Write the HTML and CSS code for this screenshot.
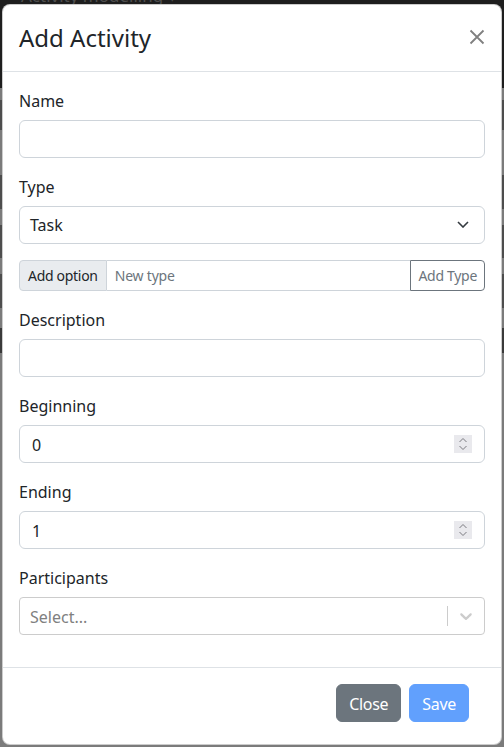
FILE: index.html
```html
<!DOCTYPE html>
<html lang="en">
<head>
<meta charset="utf-8">
<title>Add Activity</title>
<link rel="stylesheet" href="styles.css">
</head>
<body>
<div class="topbar"><span class="topbar-text">Activity modelling &#9662;</span></div>
<div class="modal">
  <div class="modal-header">
    <h4 class="modal-title">Add Activity</h4>
    <button class="btn-close" type="button" aria-label="Close">
      <svg width="16" height="16" viewBox="0 0 16 16"><path d="M1.5 1.5L14.5 14.5M14.5 1.5L1.5 14.5" stroke="#808080" stroke-width="1.8" fill="none"/></svg>
    </button>
  </div>
  <div class="modal-body">
    <div class="group">
      <label class="form-label">Name</label>
      <input class="form-control" type="text">
    </div>
    <div class="group">
      <label class="form-label">Type</label>
      <div class="form-select">
        <span>Task</span>
        <svg width="12" height="7" viewBox="0 0 12 7"><path d="M1 1L6 6L11 1" stroke="#343a40" stroke-width="1.6" fill="none"/></svg>
      </div>
    </div>
    <div class="group input-group">
      <span class="ig-text">Add option</span>
      <input class="ig-input" type="text" placeholder="New type">
      <button class="ig-btn" type="button">Add Type</button>
    </div>
    <div class="group">
      <label class="form-label">Description</label>
      <input class="form-control" type="text">
    </div>
    <div class="group">
      <label class="form-label">Beginning</label>
      <div class="number-control">
        <input class="number-input" type="text" value="0">
        <span class="spinner"><svg width="18" height="18" viewBox="0 0 18 18"><path d="M5.5 7L9 3.5L12.5 7M5.5 11L9 14.5L12.5 11" stroke="#7a7a80" stroke-width="1" fill="none"/></svg></span>
      </div>
    </div>
    <div class="group">
      <label class="form-label">Ending</label>
      <div class="number-control">
        <input class="number-input" type="text" value="1">
        <span class="spinner"><svg width="18" height="18" viewBox="0 0 18 18"><path d="M5.5 7L9 3.5L12.5 7M5.5 11L9 14.5L12.5 11" stroke="#7a7a80" stroke-width="1" fill="none"/></svg></span>
      </div>
    </div>
    <div class="group">
      <label class="form-label">Participants</label>
      <div class="rs-control">
        <div class="rs-value">Select...</div>
        <span class="rs-sep"></span>
        <span class="rs-indicator"><svg width="20" height="20" viewBox="0 0 20 20"><path fill="#cccccc" d="M4.516 7.548c0.436-0.446 1.043-0.481 1.576 0l3.908 3.747 3.908-3.747c0.533-0.481 1.141-0.446 1.574 0 0.436 0.445 0.408 1.197 0 1.615-0.406 0.418-4.695 4.502-4.695 4.502-0.217 0.223-0.502 0.335-0.787 0.335s-0.57-0.112-0.789-0.335c0 0-4.287-4.084-4.695-4.502s-0.436-1.17 0-1.615z"/></svg></span>
      </div>
    </div>
  </div>
  <div class="modal-footer">
    <button class="btn btn-secondary" type="button">Close</button>
    <button class="btn btn-primary" type="button">Save</button>
  </div>
</div>
</body>
</html>
```
FILE: styles.css
```css
* { box-sizing: border-box; }
html, body { height: 100%; }
body {
  margin: 0;
  font-family: "Noto Sans", "Segoe UI", sans-serif;
  font-size: 16px;
  line-height: 1.5;
  color: #212529;
  overflow: hidden;
  background: linear-gradient(to bottom,
    #1e1e1e 0 88px,
    #7b7b7b 88px 100px,
    #4d4d4d 100px 130px,
    #7b7b7b 130px 175px,
    #4d4d4d 175px 209px,
    #7b7b7b 209px 225px,
    #4d4d4d 225px 258px,
    #7b7b7b 258px 274px,
    #4d4d4d 274px 308px,
    #7b7b7b 308px 328px,
    #3a3a3a 328px 353px,
    #7b7b7b 353px 747px);
}
.topbar {
  height: 4px;
  overflow: hidden;
  padding-left: 21px;
  background: #1e1e1e;
  line-height: 24px;
}
.topbar-text {
  display: block;
  margin-top: -16px;
  color: #4e4e4e;
  font-size: 17px;
  white-space: nowrap;
}
.modal {
  margin: 0 2px;
  background: #fff;
  border: 1px solid rgba(0, 0, 0, 0.2);
  border-radius: 8px;
}
.modal-header {
  display: flex;
  align-items: center;
  justify-content: space-between;
  padding: 15px 16px;
  border-bottom: 1px solid #dee2e6;
}
.modal-title {
  margin: 0;
  font-size: 24px;
  font-weight: 400;
  line-height: 36px;
  color: #212529;
}
.btn-close {
  border: 0;
  background: transparent;
  padding: 0;
  width: 16px;
  height: 16px;
  margin-bottom: 3px;
  display: flex;
}
.modal-body {
  padding: 16px;
}
.group {
  margin-bottom: 16px;
}
.form-label {
  display: block;
  margin-bottom: 8px;
  padding-top: 1px;
  height: 24px;
  line-height: 24px;
}
.form-control {
  display: block;
  width: 100%;
  height: 38px;
  padding: 6px 12px;
  font: inherit;
  color: #212529;
  background: #fff;
  border: 1px solid #ced4da;
  border-radius: 6px;
}
.form-select {
  display: flex;
  align-items: center;
  justify-content: space-between;
  height: 38px;
  padding: 6px 15px 6px 10px;
  border: 1px solid #ced4da;
  border-radius: 6px;
  background: #fff;
}
.form-select svg { margin-top: -2px; }
.input-group {
  display: flex;
  height: 31px;
}
.ig-text {
  display: flex;
  align-items: center;
  padding: 4px 8px;
  font-size: 14px;
  line-height: 21px;
  letter-spacing: -0.3px;
  background: #e9ecef;
  border: 1px solid #ced4da;
  border-radius: 4px 0 0 4px;
  color: #212529;
  white-space: nowrap;
}
.ig-input {
  flex: 1;
  min-width: 0;
  padding: 4px 8px;
  font-family: inherit;
  font-size: 14px;
  line-height: 21px;
  letter-spacing: -0.2px;
  border: 1px solid #ced4da;
  border-left: 0;
  border-right: 0;
  color: #212529;
  outline: none;
}
.ig-input::placeholder { color: #6c757d; }
.ig-btn {
  padding: 4px 7px;
  font-family: inherit;
  font-size: 14px;
  line-height: 21px;
  letter-spacing: -0.3px;
  color: #6c757d;
  background: #fff;
  border: 1px solid #6c757d;
  border-radius: 0 4px 4px 0;
}
.number-control {
  display: flex;
  align-items: center;
  height: 38px;
  padding: 0 12px;
  border: 1px solid #ced4da;
  border-radius: 6px;
  background: #fff;
}
.number-input {
  flex: 1;
  min-width: 0;
  border: 0;
  padding: 1px 0 0;
  font: inherit;
  color: #212529;
  outline: none;
}
.spinner {
  display: flex;
  width: 18px;
  height: 18px;
  background: #e9e9ed;
}
.rs-control {
  display: flex;
  align-items: center;
  height: 38px;
  border: 1px solid #cccccc;
  border-radius: 4px;
  background: #fff;
}
.rs-value {
  flex: 1;
  padding: 3px 8px 1px;
  margin: 0 2px;
  color: #808080;
}
.rs-sep {
  align-self: stretch;
  width: 1px;
  margin: 8px 0;
  background: #cccccc;
}
.rs-indicator {
  display: flex;
  padding: 8px;
}
.modal-footer {
  display: flex;
  justify-content: flex-end;
  gap: 8px;
  padding: 16px 32px 22px 16px;
  border-top: 1px solid #dee2e6;
}
.btn {
  padding: 7px 12px 5px;
  font-family: inherit;
  font-size: 16px;
  line-height: 24px;
  letter-spacing: -0.3px;
  color: #fff;
  border: 1px solid transparent;
  border-radius: 6px;
}
.btn-secondary {
  background: #6c757d;
  border-color: #6c757d;
}
.btn-primary {
  background: #0d6efd;
  border-color: #0d6efd;
  opacity: 0.65;
}
```
